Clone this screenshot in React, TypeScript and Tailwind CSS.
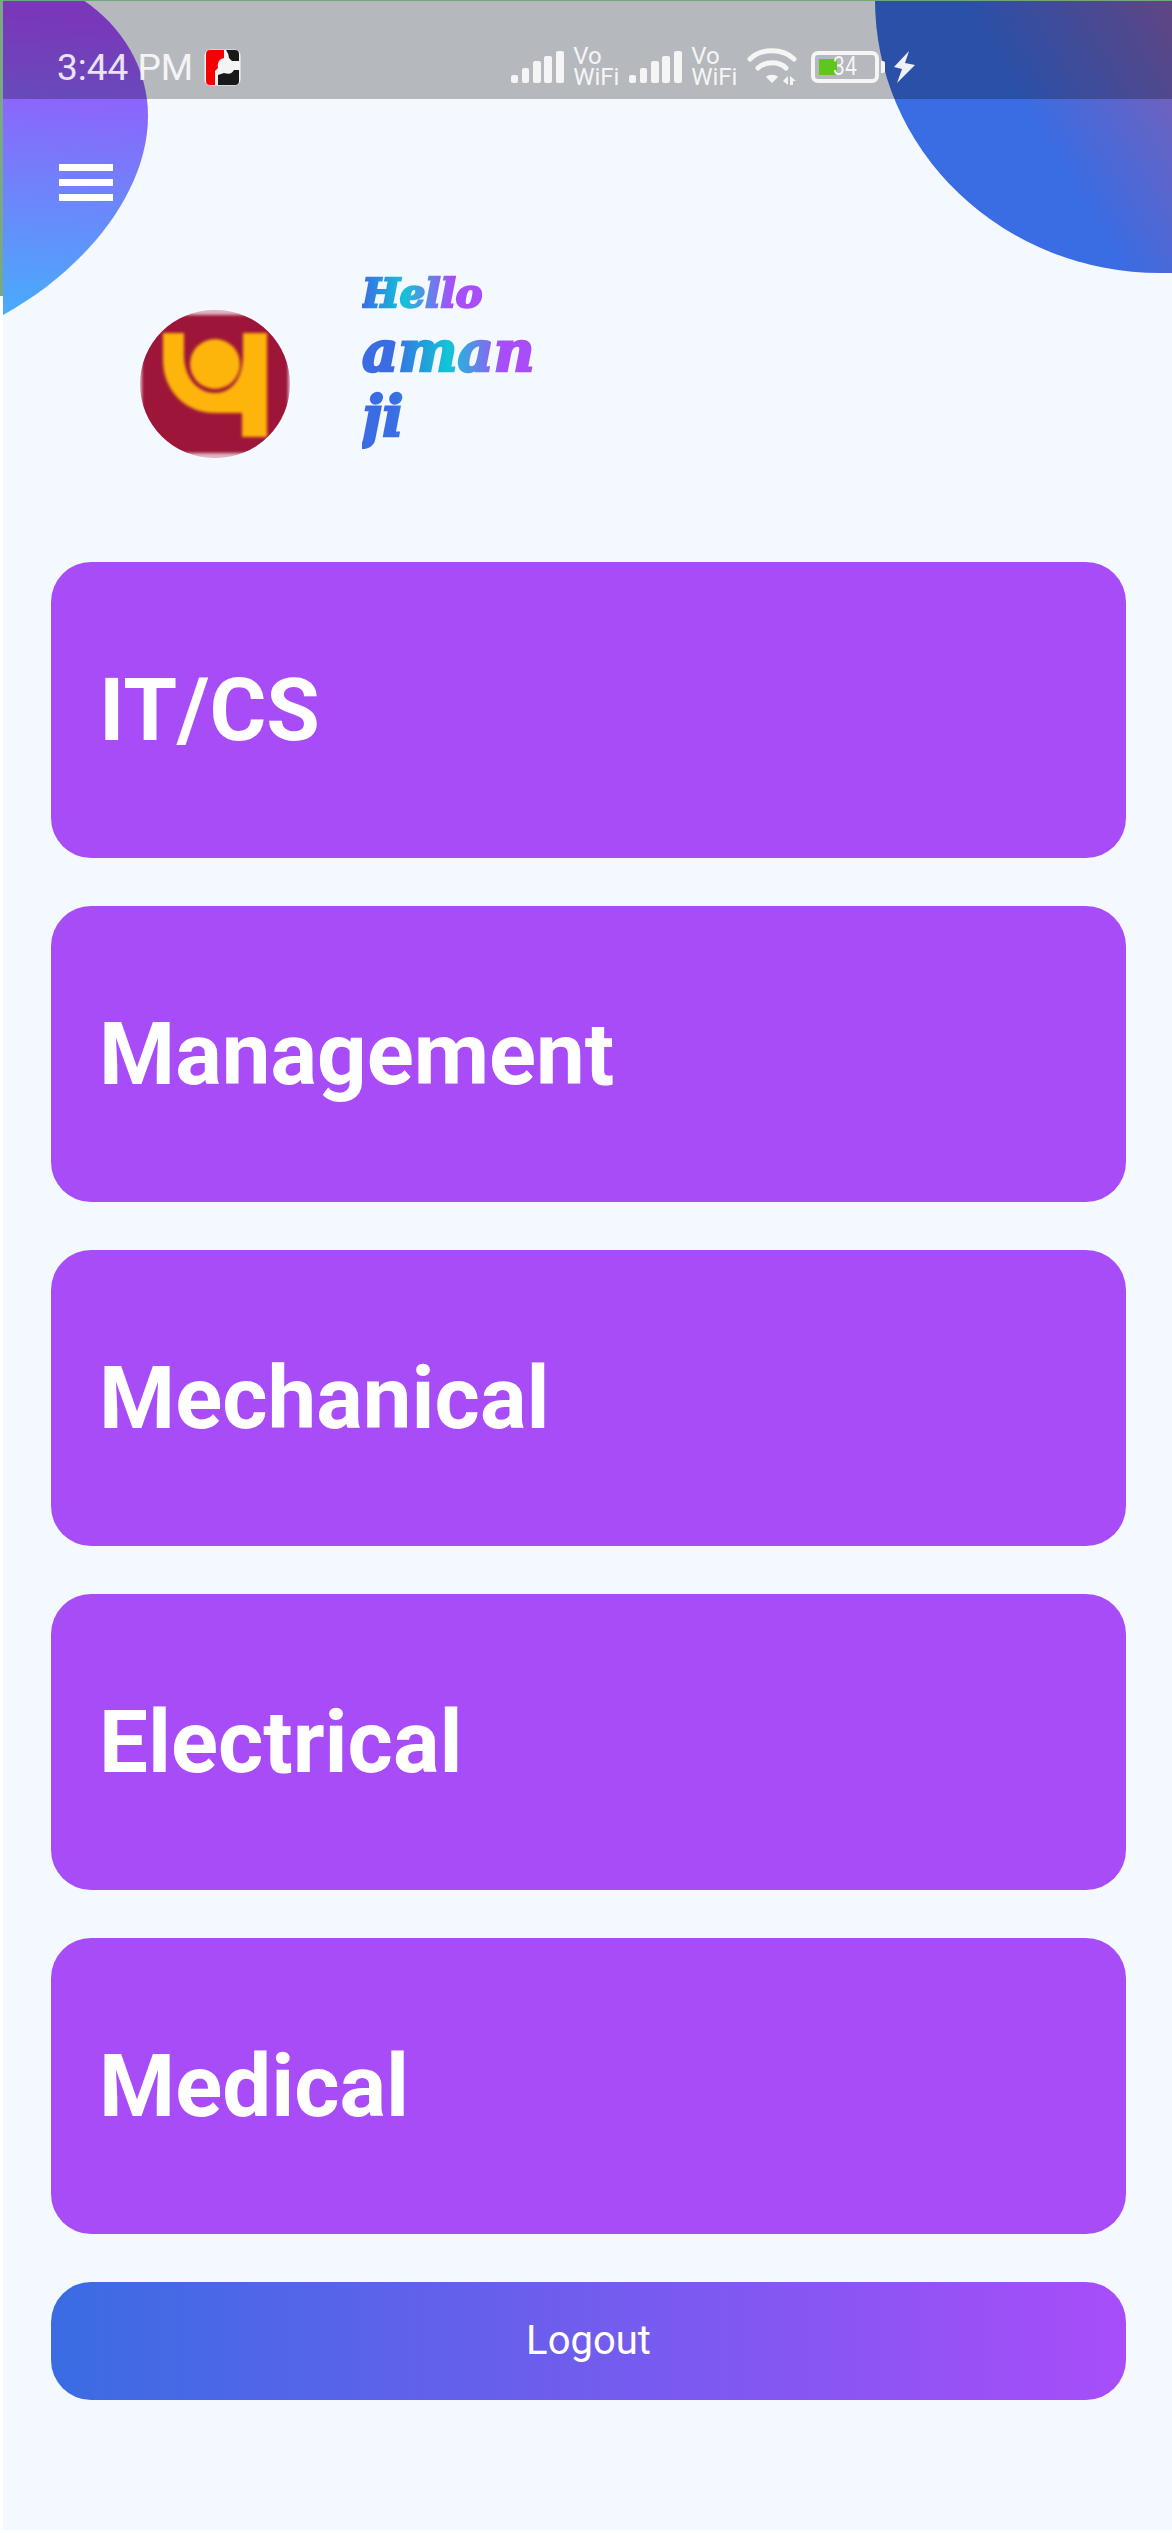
import React from "react";

const roboto = "font-['Roboto',sans-serif]";

function Signal() {
  const bars = [
    [0, 24, 7, 8],
    [11, 17, 7, 15],
    [22, 10, 8, 22],
    [33, 5, 8, 27],
    [45, 0, 8, 32],
  ];
  return (
    <svg width="54" height="33" viewBox="0 0 54 33" className="shrink-0">
      {bars.map(([x, y, w, h], i) => (
        <rect key={i} x={x} y={y} width={w} height={h} rx="2" fill="#f5f5f5" />
      ))}
    </svg>
  );
}

function VoWifi() {
  return (
    <div className="w-[46px] shrink-0 font-['Roboto',sans-serif] text-[24px] font-normal leading-[21px] text-[#f5f5f5]">
      Vo
      <br />
      WiFi
    </div>
  );
}

function Wifi() {
  return (
    <svg width="50" height="38" viewBox="0 0 50 38" className="shrink-0" fill="none" stroke="#f5f5f5" strokeLinecap="round">
      <path d="M3 11 C14 0 36 0 47 11" strokeWidth="5" />
      <path d="M11 20 C18 13 32 13 39 20" strokeWidth="5" />
      <path d="M19 29 C22 26 28 26 31 29 L25 35 Z" fill="#f5f5f5" stroke="none" />
      <path d="M41 28 V37 L36 33 Z" fill="#f5f5f5" stroke="none" />
      <path d="M43 37 V28 L49 33 H46 V37 Z" fill="#f5f5f5" stroke="none" />
    </svg>
  );
}

function Battery() {
  return (
    <div className="flex shrink-0 items-center gap-[2px]">
      <div className="relative h-[32px] w-[68px] rounded-[7px] border-[4px] border-[#f5f5f5]">
        <div className="absolute left-[4px] top-[4px] h-[16px] w-[18px] bg-[#5fc61f]" />
        <span className="absolute left-[18px] top-[0px] origin-left scale-x-[0.85] font-['Roboto',sans-serif] text-[25px] leading-[24px] text-[#f5f5f5]">
          34
        </span>
      </div>
      <div className="h-[12px] w-[4px] rounded-r-[2px] bg-[#f5f5f5]" />
    </div>
  );
}

function Bolt() {
  return (
    <svg width="21" height="32" viewBox="0 0 21 32" className="ml-[9px] shrink-0">
      <path d="M15 0 L11 12 L21 14 L3 32 L8 18 L0 16 Z" fill="#eef1f8" />
    </svg>
  );
}

function AppIcon() {
  return (
    <svg width="37" height="37" viewBox="0 0 37 37" className="ml-[11px] shrink-0">
      <rect x="0.5" y="0.5" width="36" height="36" rx="6" fill="#f4f4f4" />
      <path d="M2 5 Q2 1 6 1 H20 V9 C15 10 13 14 14 19 L11 22 V36 H6 Q2 36 2 32 Z" fill="#f60000" />
      <path d="M22 1 H31 Q35 1 35 5 V12 H28 L25 9 Q25 5 22 1 Z" fill="#191919" />
      <path d="M14 36 V26 L20 24 C26 26 28 24 30 21 H35 V32 Q35 36 31 36 Z" fill="#191919" />
    </svg>
  );
}

function Avatar() {
  return (
    <div className="h-[148px] w-[150px] shrink-0 overflow-hidden rounded-full bg-[#dfb5c0]">
      <svg width="150" height="148" viewBox="0 0 150 148" className="block">
        <g className="blur-[1.5px]">
          <rect x="2" y="5" width="146" height="138" fill="#9d1538" />
          <path
            d="M23 23 H44 V45 C44 68 58 83 75 83 C92 83 103 68 103 45 V23 H127 V127 H102 V103 H75 C45 103 23 80 23 50 Z"
            fill="#fdb40b"
          />
          <circle cx="75" cy="54" r="25" fill="#fdb40b" />
        </g>
      </svg>
    </div>
  );
}

function Card({ label }: { label: string }) {
  return (
    <div className="flex h-[296px] items-center rounded-[40px] bg-[#a84cf8] pl-[48px]">
      <span className={`${roboto} text-[87px] font-bold leading-none text-white`}>{label}</span>
    </div>
  );
}

export default function App() {
  return (
    <div className="relative h-[2533px] w-[1172px] overflow-hidden bg-white">
      <div className="relative ml-[3px] h-[2530px] bg-[#f4f8ff]">
        <div className="relative z-10 pl-[56px] pt-[164px]">
          <div className="flex w-[54px] flex-col gap-[8px]">
            <div className="h-[7px] bg-white" />
            <div className="h-[7px] bg-white" />
            <div className="h-[7px] bg-white" />
          </div>
        </div>

        <div className="mt-[109px] flex pl-[137px]">
          <Avatar />
          <div className="ml-[72px] -mt-[42px] w-[172px] font-['DejaVu_Serif',serif] font-bold italic [-webkit-text-stroke:2.5px_transparent]">
            <div className="w-fit bg-[linear-gradient(to_right,#3a6ce3,#12c3d8_35%,#a84df9_75%)] bg-clip-text text-[40px] leading-[50px] text-transparent">
              Hello
            </div>
            <div className="mt-[1px] bg-[linear-gradient(to_right,#3a6ce3_18%,#0fc6d6_50%,#a84df9_82%)] bg-clip-text text-[56px] leading-[65px] text-transparent">
              aman
              <br />
              ji
            </div>
          </div>
        </div>

        <div className="mt-[104px] flex flex-col gap-[48px] pl-[48px] pr-[46px]">
          {["IT/CS", "Management", "Mechanical", "Electrical", "Medical"].map((t) => (
            <Card key={t} label={t} />
          ))}
          <button className="flex h-[118px] items-center justify-center rounded-[40px] bg-[linear-gradient(to_right,#3a6ce3,#a84df9)]">
            <span className={`${roboto} text-[40px] font-normal text-white`}>Logout</span>
          </button>
        </div>
      </div>

      <svg width="1172" height="320" viewBox="0 0 1172 320" className="absolute left-0 top-0">
        <defs>
          <linearGradient id="leftBlob" gradientUnits="userSpaceOnUse" x1="40" y1="20" x2="20" y2="315">
            <stop offset="0" stopColor="#a44cfb" />
            <stop offset="1" stopColor="#48acfb" />
          </linearGradient>
          <linearGradient id="rightBlob" gradientUnits="userSpaceOnUse" x1="1060" y1="165" x2="1300" y2="20">
            <stop offset="0" stopColor="#3a6ce3" />
            <stop offset="1" stopColor="#a85796" />
          </linearGradient>
        </defs>
        <path d="M3 0 H83 C122 26 148 68 148 116 C148 190 88 268 3 315 Z" fill="url(#leftBlob)" />
        <path d="M875 0 A285 273 0 0 0 1160 273 H1172 V0 Z" fill="url(#rightBlob)" />
      </svg>

      <div className="absolute left-0 top-0 flex h-[99px] w-full items-center bg-black/[0.26] pl-[57px] pt-[35px]">
        <span className="font-['Roboto',sans-serif] text-[37px] leading-none text-white/85">3:44 PM</span>
        <AppIcon />
        <div className="ml-[270px] flex items-center">
          <Signal />
          <div className="ml-[8px]">
            <VoWifi />
          </div>
          <div className="ml-[10px]">
            <Signal />
          </div>
          <div className="ml-[8px]">
            <VoWifi />
          </div>
          <div className="ml-[10px]">
            <Wifi />
          </div>
          <div className="ml-[14px]">
            <Battery />
          </div>
          <Bolt />
        </div>
      </div>

      <div className="absolute left-0 top-0 h-[1px] w-full bg-[#6fa87a]" />
      <div className="absolute left-0 top-0 h-[296px] w-[3px] bg-[#7aa884]" />
    </div>
  );
}
